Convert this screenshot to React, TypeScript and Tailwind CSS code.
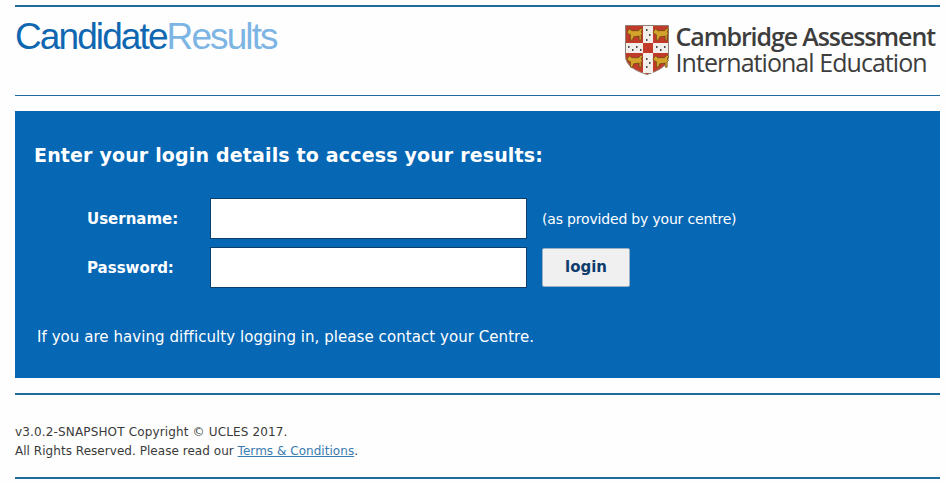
import React from 'react';

const verdana = 'font-["DejaVu_Sans",Verdana,sans-serif]';

function Shield() {
  // gold lion in each red quarter
  const lion = (x: number, y: number) => (
    <g key={`${x}-${y}`} transform={`translate(${x} ${y}) scale(1.35)`} fill="#d3a32c" stroke="#5e4312" strokeWidth="0.5">
      <path d="M0 3l2-2.500 1.500 1.500h5l2-2 1 1-1 2 1 1-1 1v4h-1.500v-3l-4 .5-1 2.500h-1.500v-4l-2-1z" />
    </g>
  );
  const spots: [number, number][] = [
    [3, 21], [7, 24], [11, 21], [15, 24], [31, 21], [35, 24], [39, 21],
    [21, 4], [24, 9], [21, 14], [21, 33], [24, 37], [21, 41],
  ];
  return (
    <svg width="44" height="50" viewBox="0 0 44 50" className="shrink-0">
      <path d="M0.500 0.500H43.500V31C43.500 41 33 46 22 49.500C11 46 0.500 41 0.500 31Z" fill="#c23b2a" stroke="#8f8076" strokeWidth="1" />
      <rect x="18" y="1" width="10" height="47" fill="#f2efeb" />
      <rect x="1" y="18" width="42" height="10" fill="#f2efeb" />
      <rect x="18" y="18" width="10" height="10" fill="#c23b2a" />
      {[lion(2, 3), lion(28, 3), lion(2, 30), lion(28, 30)]}
      <g fill="#4a4a4a">
        {spots.map(([x, y]) => (
          <rect key={`${x}-${y}`} x={x} y={y} width="1.500" height="2" />
        ))}
      </g>
    </svg>
  );
}

export default function App() {
  return (
    <div className={`w-[947px] h-[484px] overflow-hidden bg-[#fefefe] pl-[15px] pr-[7px] pt-[5px] ${verdana}`}>
      <div className="border-t-2 border-[#1f6b9a]" />

      <header className="flex justify-between h-[89px] border-b border-[#1f6b9a]">
        <div className='mt-[9px] h-[42px] text-[37px] leading-[42px] tracking-[-1.9px] font-["Liberation_Sans",Arial,sans-serif] text-[#0f67b1]'>
          Candidate<span className="text-[#7cb5e4]">Results</span>
        </div>
        <div className="flex items-start pt-[18px] pr-[5px]">
          <Shield />
          <div className='ml-[7px] mt-[-2px] font-["Open_Sans",sans-serif] text-[25px] leading-[26px] text-[#3d3d3d] whitespace-nowrap'>
            <div className="font-semibold tracking-[-1.1px]">Cambridge Assessment</div>
            <div className="tracking-[-0.95px]">International Education</div>
          </div>
        </div>
      </header>

      <main className="mt-[15px] h-[267px] bg-[#0667b5] text-white">
        <h1 className="pl-[19px] pt-[30px] text-[19px] leading-[28px] font-bold tracking-[0.16px]">
          Enter your login details to access your results:
        </h1>
        <div className="mt-[29px] pl-[72px] flex flex-col gap-[8px]">
          <div className="flex items-center">
            <label className="w-[123px] pt-px text-[15px] font-bold">Username:</label>
            <input className="w-[317px] h-[41px] bg-white border border-[#0b3f6b]" />
            <span className="ml-[15px] pt-px text-[14px] tracking-[-0.18px]">(as provided by your centre)</span>
          </div>
          <div className="flex items-center">
            <label className="w-[123px] pt-px text-[15px] font-bold">Password:</label>
            <input type="password" className="w-[317px] h-[41px] bg-white border border-[#0b3f6b]" />
            <button className="ml-[15px] w-[88px] h-[39px] rounded-[2px] bg-[#f0f0f0] border border-[#9ab0c4] text-[15px] font-bold text-[#0f3d6b]">
              login
            </button>
          </div>
        </div>
        <p className="mt-[38px] pl-[22px] text-[15px] leading-[22px] tracking-[0.06px]">
          If you are having difficulty logging in, please contact your Centre.
        </p>
      </main>

      <footer className="mt-[15px] h-[86px] border-y-2 border-[#1f6b9a] pt-[28px] text-[12px] leading-[19px] text-[#3a3a3a]">
        <p className="tracking-[0.15px]">v3.0.2-SNAPSHOT Copyright © UCLES 2017.</p>
        <p className="tracking-[0.04px]">
          All Rights Reserved. Please read our <a href="#" className="underline text-[#3a7bb0]">Terms &amp; Conditions</a>.
        </p>
      </footer>
    </div>
  );
}
